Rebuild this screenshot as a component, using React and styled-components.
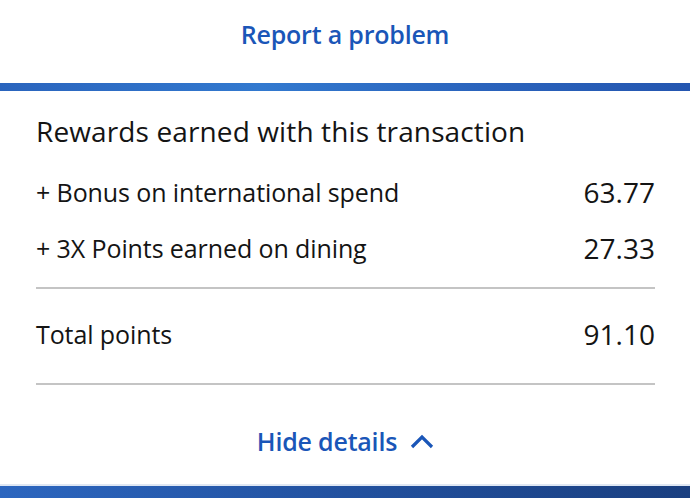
import React from "react";
import styled, { createGlobalStyle } from "styled-components";

const Global = createGlobalStyle`
  html, body { margin: 0; padding: 0; background: #fff; }
  body { font-family: "Open Sans", "Noto Sans", sans-serif; color: #141414; }
`;

const Page = styled.div`
  width: 690px;
  height: 498px;
  display: flex;
  flex-direction: column;
  overflow: hidden;
  background: #fff;
`;

const TopLink = styled.div`
  height: 83px;
  display: flex;
  align-items: center;
  justify-content: center;
  padding-bottom: 16px;
  box-sizing: border-box;
`;

const LinkText = styled.span`
  color: #1a56b8;
  font-size: 25px;
  font-weight: 600;
  letter-spacing: -0.2px;
  display: inline-flex;
  align-items: center;
  gap: 13px;
`;

const Bar = styled.div`
  height: ${(p) => p.$h}px;
  flex-shrink: 0;
  background: ${(p) => p.$bg};
`;

const Card = styled.div`
  flex: 1;
  display: flex;
  flex-direction: column;
  padding: 0 35px 0 36px;
`;

const Title = styled.h2`
  margin: 22px 0 0;
  font-size: 28px;
  font-weight: 400;
  line-height: 36px;
  letter-spacing: 0.12px;
  color: #141414;
`;

const Rows = styled.div`
  display: flex;
  flex-direction: column;
  margin-top: 22px;
  gap: 14px;
`;

const Row = styled.div`
  display: flex;
  justify-content: space-between;
  align-items: center;
  height: ${(p) => p.$h || 42}px;
  margin-top: ${(p) => p.$mt || 0}px;
`;

const Label = styled.span`
  font-size: 25px;
  letter-spacing: -0.1px;
  color: #141414;
`;

const Value = styled.span`
  font-size: 28px;
  color: #141414;
`;

const Divider = styled.hr`
  border: 0;
  height: 2px;
  background: #c4c4c4;
  margin: ${(p) => p.$m};
`;

const Footer = styled.div`
  display: flex;
  justify-content: center;
  margin-top: 39px;
`;

export default function App() {
  return (
    <Page>
      <Global />
      <TopLink>
        <LinkText>Report a problem</LinkText>
      </TopLink>
      <Bar $h={8} $bg="linear-gradient(90deg, #2a64bd 0%, #3279cf 38%, #2a63bc 70%, #2456b0 100%)" />
      <Card>
        <Title>Rewards earned with this transaction</Title>
        <Rows>
          <Row>
            <Label>+ Bonus on international spend</Label>
            <Value>63.77</Value>
          </Row>
          <Row>
            <Label>+ 3X Points earned on dining</Label>
            <Value>27.33</Value>
          </Row>
        </Rows>
        <Divider $m="18px 0 0" />
        <Row $h={52} $mt={19}>
          <Label>Total points</Label>
          <Value>91.10</Value>
        </Row>
        <Divider $m="23px 0 0" />
        <Footer>
          <LinkText>
            Hide details
            <svg width="24" height="16" viewBox="0 0 24 16" fill="none">
              <path d="M2 14 L12 4 L22 14" stroke="#1a56b8" strokeWidth="3.2" />
            </svg>
          </LinkText>
        </Footer>
      </Card>
      <Bar $h={2} $bg="#dfe7f3" />
      <Bar $h={12} $bg="linear-gradient(90deg, #2c66bf 0%, #22519f 50%, #1a3f80 100%)" />
    </Page>
  );
}
